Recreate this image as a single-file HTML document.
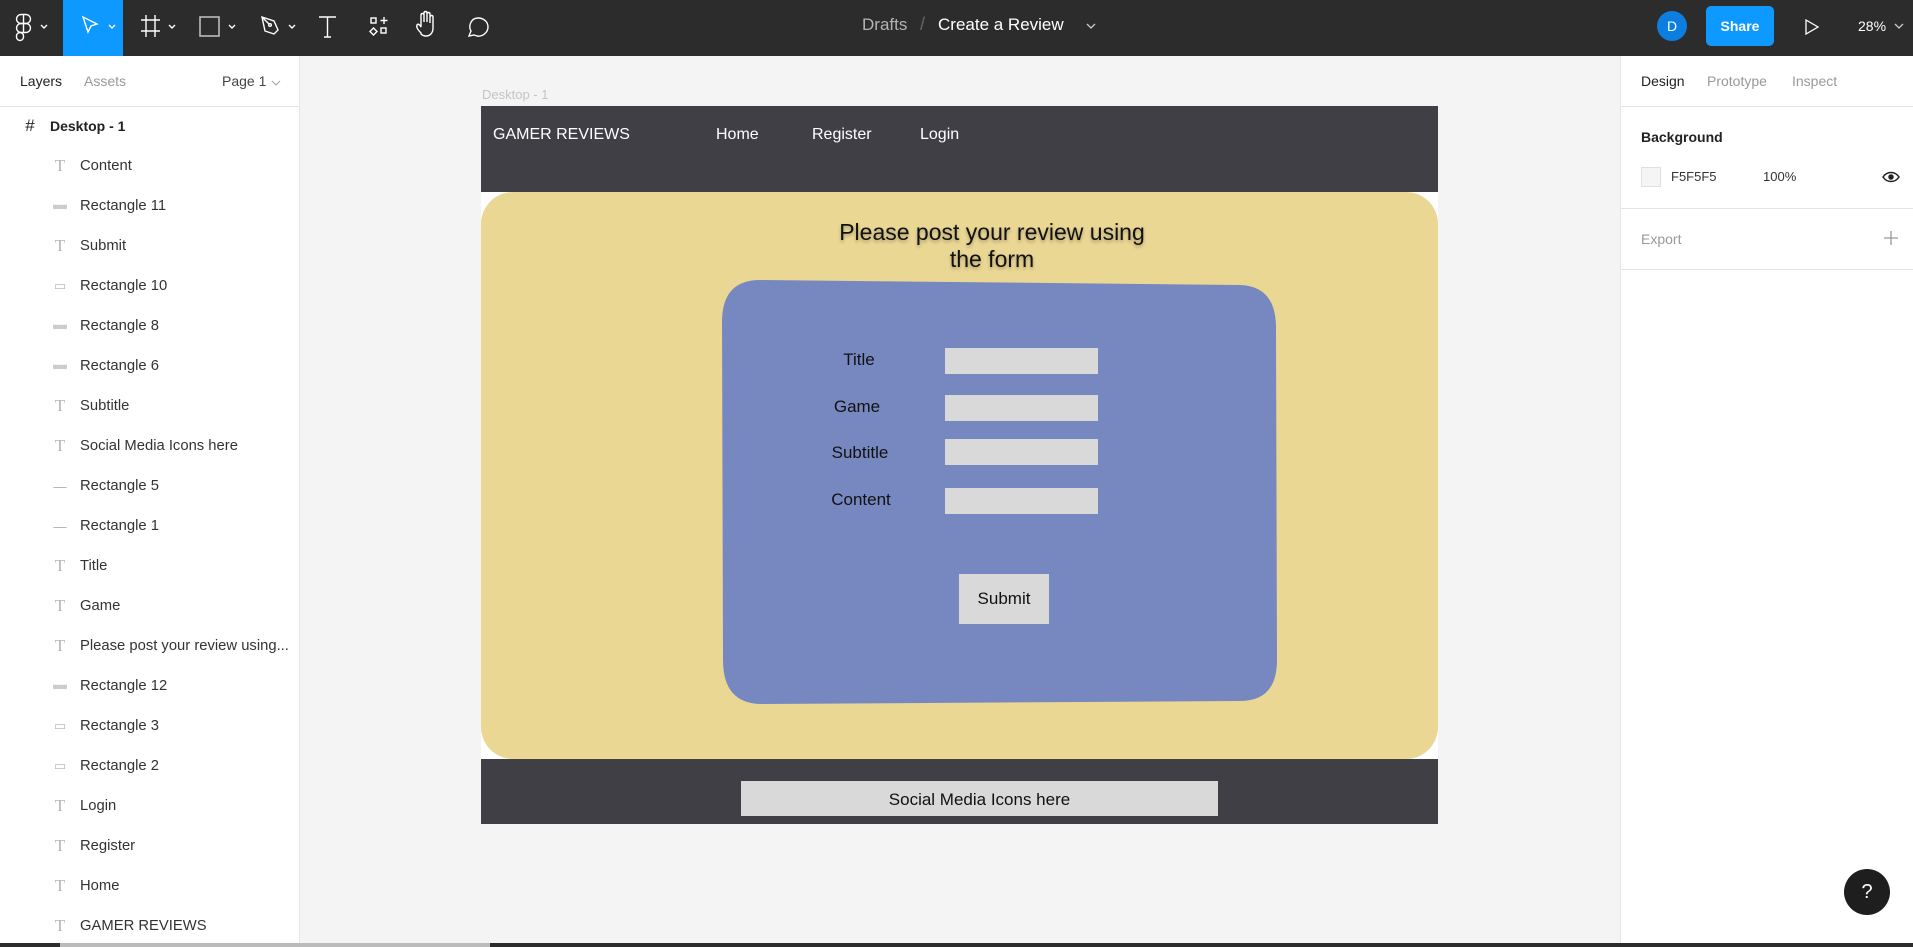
<!DOCTYPE html>
<html><head><meta charset="utf-8"><style>
*{margin:0;padding:0;box-sizing:border-box}
body{width:1913px;height:947px;overflow:hidden;background:#f4f4f4;font-family:"Liberation Sans",sans-serif;position:relative}
.abs{position:absolute}
.tb{left:0;top:0;width:1913px;height:56px;background:#2c2c2c}
.lp{left:0;top:56px;width:300px;height:891px;background:#fff;border-right:1px solid #e5e5e5}
.rp{left:1620px;top:56px;width:293px;height:891px;background:#fff;border-left:1px solid #e5e5e5}
.row{position:absolute;left:0;height:40px;font-size:14.8px;color:#333;display:flex;align-items:center}
.row .ic{position:absolute;left:52px;width:16px;text-align:center;color:#b3b3b3;font-size:17px;font-family:"Liberation Serif",serif}
.row .tx{position:absolute;left:80px;white-space:nowrap}
.t{position:absolute;white-space:nowrap}
</style></head><body>
<div class="abs tb"></div>
<div class="abs" style="left:63px;top:0;width:60px;height:56px;background:#0d99ff"></div>
<svg class="abs" style="left:0;top:0" width="620" height="56" fill="none" stroke="#fff" stroke-width="1.4">
<g transform="translate(16,14)"><rect x="0.5" y="0.5" width="14" height="9" rx="4.5"/><rect x="0.5" y="9.5" width="14" height="9" rx="4.5"/><rect x="0.5" y="18.5" width="7" height="8" rx="3.5"/><line x1="7.5" y1="0" x2="7.5" y2="19"/></g>
<path d="M41 25l3 3 3-3M109 25l3 3 3-3M169 25l3 3 3-3M229 25l3 3 3-3M289 25l3 3 3-3"/>
<path d="M83 17l14 7-6 2-3 6z"/>
<path d="M146 15v22M155 15v22M141 20h19M141 31h19"/>
<rect x="200" y="17" width="19" height="19" stroke="#bbb" stroke-width="1.6"/>
<path d="M262 17l12 4 4 9-4 4-9-3zM262 17l7 7"/><circle cx="270" cy="25" r="1.3"/>
<path d="M319 17h17M327.5 17v20M324 37h7"/>
<rect x="371" y="18" width="5" height="5"/><path d="M384 17v7M380.5 20.5h7M373.5 28l3.5 3.5-3.5 3.5-3.5-3.5z"/><rect x="381" y="28" width="5" height="5"/>
<path d="M421 33c-3-3-5-6-4-8s3 0 4 2v-12c0-2 3-2 3 0v7-9c0-2 3-2 3 0v9-8c0-2 3-2 3 0v9-6c0-2 3-2 3 0v11c0 5-3 8-7 8-2 0-4-1-5-2z"/>
<path d="M469 36l2-5c-3-5 0-13 7-13 6 0 10 4 10 9s-5 10-11 9l-3-1z"/>
</svg>
<div class="t" style="left:862px;top:15px;font-size:17px;color:#b3b3b3">Drafts</div>
<div class="t" style="left:920px;top:14px;font-size:18px;color:#666">/</div>
<div class="t" style="left:938px;top:15px;font-size:17px;color:#fff">Create a Review</div>
<svg class="abs" style="left:1086px;top:22px" width="10" height="8" fill="none" stroke="#ccc" stroke-width="1.3"><path d="M1 2l4 4 4-4"/></svg>
<div class="abs" style="left:1657px;top:11px;width:30px;height:30px;border-radius:50%;background:#0c7ee0;color:#fff;font-size:14px;text-align:center;line-height:30px">D</div>
<div class="abs" style="left:1706px;top:6px;width:68px;height:40px;border-radius:5px;background:#0d99ff;color:#fff;font-size:14px;font-weight:bold;text-align:center;line-height:40px">Share</div>
<svg class="abs" style="left:1804px;top:18px" width="16" height="18" fill="none" stroke="#fff" stroke-width="1.3"><path d="M2 2l12 7-12 7z"/></svg>
<div class="t" style="left:1858px;top:18px;font-size:14px;color:#fff">28%</div>
<svg class="abs" style="left:1894px;top:22px" width="10" height="8" fill="none" stroke="#ccc" stroke-width="1.3"><path d="M1 2l4 4 4-4"/></svg>

<div class="abs lp">
<div class="t" style="left:20px;top:17px;font-size:14px;color:#222">Layers</div>
<div class="t" style="left:84px;top:17px;font-size:14px;color:#999">Assets</div>
<div class="t" style="left:222px;top:17px;font-size:14px;color:#444">Page 1</div>
<svg class="abs" style="left:271px;top:23px" width="10" height="8" fill="none" stroke="#aaa" stroke-width="1.2"><path d="M1 2l4 4 4-4"/></svg>
<div class="abs" style="left:0;top:50px;width:300px;height:1px;background:#e5e5e5"></div>
</div>

<div class="abs rp">
<div class="t" style="left:20px;top:17px;font-size:14px;color:#222">Design</div>
<div class="t" style="left:86px;top:17px;font-size:14px;color:#999">Prototype</div>
<div class="t" style="left:171px;top:17px;font-size:14px;color:#999">Inspect</div>
<div class="abs" style="left:0;top:50px;width:293px;height:1px;background:#e5e5e5"></div>
<div class="t" style="left:20px;top:73px;font-size:14px;color:#222;font-weight:bold">Background</div>
<div class="abs" style="left:20px;top:111px;width:20px;height:20px;background:#f5f5f5;border:1px solid #e0e0e0"></div>
<div class="t" style="left:50px;top:113px;font-size:13px;color:#333">F5F5F5</div>
<div class="t" style="left:142px;top:113px;font-size:13px;color:#333">100%</div>
<svg class="abs" style="left:261px;top:115px" width="18" height="12" fill="none" stroke="#222" stroke-width="1.5"><path d="M1 6c4-6 12-6 16 0c-4 6-12 6-16 0z"/><circle cx="9" cy="6" r="2" fill="#222"/></svg>
<div class="abs" style="left:0;top:152px;width:293px;height:1px;background:#e5e5e5"></div>
<div class="t" style="left:20px;top:175px;font-size:14px;color:#999">Export</div>
<svg class="abs" style="left:262px;top:174px" width="16" height="16" stroke="#999" stroke-width="1.3"><path d="M8 1v14M1 8h14"/></svg>
<div class="abs" style="left:0;top:213px;width:293px;height:1px;background:#e5e5e5"></div>
</div>

<div class="t" style="left:482px;top:87px;font-size:13px;color:#c4c4c4">Desktop - 1</div>
<div class="abs" style="left:481px;top:106px;width:957px;height:718px;background:#fff"></div>
<div class="abs" style="left:481px;top:106px;width:957px;height:86px;background:#403f45"></div>
<div class="t" style="left:493px;top:126px;font-size:16px;color:#fff">GAMER REVIEWS</div>
<div class="t" style="left:716px;top:126px;font-size:16px;color:#fff">Home</div>
<div class="t" style="left:812px;top:126px;font-size:16px;color:#fff">Register</div>
<div class="t" style="left:920px;top:126px;font-size:16px;color:#fff">Login</div>
<div class="abs" style="left:481px;top:192px;width:957px;height:567px;background:#ebd794;border-radius:32px"></div>
<div class="t" style="left:742px;top:219px;width:500px;text-align:center;font-size:23px;line-height:27px;color:#111;text-shadow:0 2px 3px rgba(0,0,0,.3)">Please post your review using<br>the form</div>
<svg class="abs" style="left:720px;top:278px" width="560" height="428"><path d="M40 2L520 7Q556 8 556 50L557 382Q557 423 520 423L42 426Q3 426 3 382L2 44Q2 2 40 2Z" fill="#7788c0"/></svg>
<div class="t" style="left:819px;top:350px;width:80px;text-align:center;font-size:17px;color:#111">Title</div>
<div class="t" style="left:817px;top:397px;width:80px;text-align:center;font-size:17px;color:#111">Game</div>
<div class="t" style="left:820px;top:443px;width:80px;text-align:center;font-size:17px;color:#111">Subtitle</div>
<div class="t" style="left:821px;top:490px;width:80px;text-align:center;font-size:17px;color:#111">Content</div>
<div class="abs" style="left:945px;top:348px;width:153px;height:26px;background:#d9d9d9"></div>
<div class="abs" style="left:945px;top:395px;width:153px;height:26px;background:#d9d9d9"></div>
<div class="abs" style="left:945px;top:439px;width:153px;height:26px;background:#d9d9d9"></div>
<div class="abs" style="left:945px;top:488px;width:153px;height:26px;background:#d9d9d9"></div>
<div class="abs" style="left:959px;top:574px;width:90px;height:50px;background:#d9d9d9;font-size:17px;color:#111;text-align:center;line-height:50px">Submit</div>
<div class="abs" style="left:481px;top:759px;width:957px;height:65px;background:#403f45"></div>
<div class="abs" style="left:741px;top:781px;width:477px;height:35px;background:#d9d9d9;font-size:17px;color:#111;text-align:center;line-height:38px">Social Media Icons here</div>

<div class="abs" style="left:1844px;top:869px;width:46px;height:46px;border-radius:50%;background:#1e1e1e;color:#fff;text-align:center;line-height:46px;font-size:20px">?</div>
<div class="abs" style="left:0;top:943px;width:1913px;height:4px;background:#2c2c2c"></div>
<div class="abs" style="left:60px;top:943px;width:430px;height:4px;background:#bbb"></div>

<div class="abs" style="left:0;top:106px;width:300px">
<div class="row" style="top:0"><span class="ic" style="left:22px;font-family:'Liberation Sans';color:#222">#</span><span class="tx" style="left:50px;font-weight:bold;color:#222;font-size:14px">Desktop - 1</span></div>
<div class="row" style="top:40px"><span class="ic">T</span><span class="tx">Content</span></div>
<div class="row" style="top:80px"><span class="ic" style="font-size:14px;color:#ccc">▬</span><span class="tx">Rectangle 11</span></div>
<div class="row" style="top:120px"><span class="ic">T</span><span class="tx">Submit</span></div>
<div class="row" style="top:160px"><span class="ic" style="font-size:13px;color:#bbb;font-family:'DejaVu Sans'">▭</span><span class="tx">Rectangle 10</span></div>
<div class="row" style="top:200px"><span class="ic" style="font-size:14px;color:#ccc">▬</span><span class="tx">Rectangle 8</span></div>
<div class="row" style="top:240px"><span class="ic" style="font-size:14px;color:#ccc">▬</span><span class="tx">Rectangle 6</span></div>
<div class="row" style="top:280px"><span class="ic">T</span><span class="tx">Subtitle</span></div>
<div class="row" style="top:320px"><span class="ic">T</span><span class="tx">Social Media Icons here</span></div>
<div class="row" style="top:360px"><span class="ic" style="font-family:'Liberation Sans';color:#aaa;font-size:13px">—</span><span class="tx">Rectangle 5</span></div>
<div class="row" style="top:400px"><span class="ic" style="font-family:'Liberation Sans';color:#aaa;font-size:13px">—</span><span class="tx">Rectangle 1</span></div>
<div class="row" style="top:440px"><span class="ic">T</span><span class="tx">Title</span></div>
<div class="row" style="top:480px"><span class="ic">T</span><span class="tx">Game</span></div>
<div class="row" style="top:520px"><span class="ic">T</span><span class="tx">Please post your review using...</span></div>
<div class="row" style="top:560px"><span class="ic" style="font-size:14px;color:#ccc">▬</span><span class="tx">Rectangle 12</span></div>
<div class="row" style="top:600px"><span class="ic" style="font-size:13px;color:#bbb;font-family:'DejaVu Sans'">▭</span><span class="tx">Rectangle 3</span></div>
<div class="row" style="top:640px"><span class="ic" style="font-size:13px;color:#bbb;font-family:'DejaVu Sans'">▭</span><span class="tx">Rectangle 2</span></div>
<div class="row" style="top:680px"><span class="ic">T</span><span class="tx">Login</span></div>
<div class="row" style="top:720px"><span class="ic">T</span><span class="tx">Register</span></div>
<div class="row" style="top:760px"><span class="ic">T</span><span class="tx">Home</span></div>
<div class="row" style="top:800px"><span class="ic">T</span><span class="tx">GAMER REVIEWS</span></div>
</div>
</body></html>
